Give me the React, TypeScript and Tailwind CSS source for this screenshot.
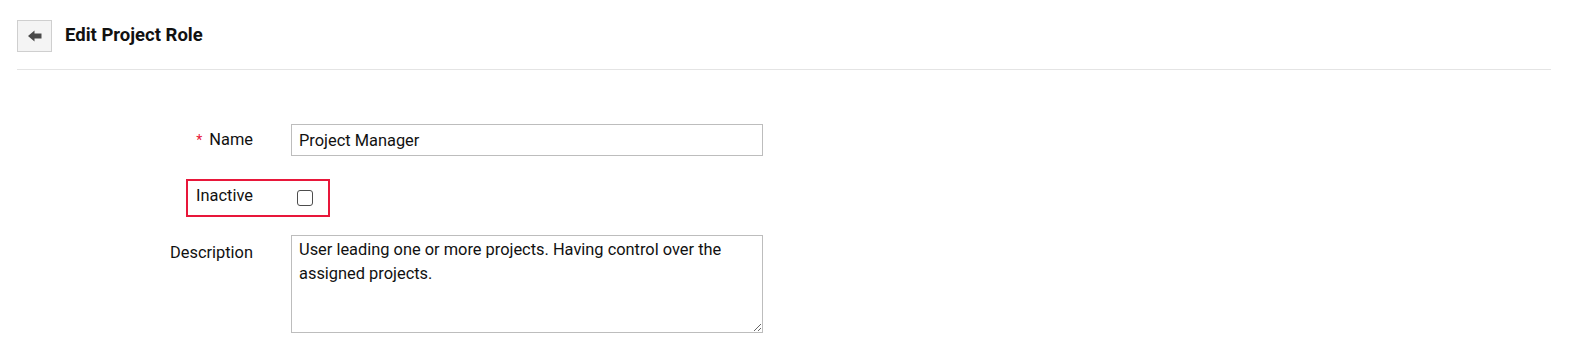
import { useState } from 'react'

function BackArrow() {
  return (
    <svg width="14" height="12" viewBox="0 0 14 12" fill="#4a4a4a">
      <path d="M0 6 L6.5 0.5 L6.5 3.5 L13.5 3.5 L13.5 8.5 L6.5 8.5 L6.5 11.5 Z" />
    </svg>
  )
}

export default function App() {
  const [name, setName] = useState('Project Manager')
  const [desc, setDesc] = useState('User leading one or more projects. Having control over the assigned projects.')
  const [inactive, setInactive] = useState(false)

  return (
    <div className="min-h-screen bg-white px-[17px] text-[16.4px] text-[#111]" style={{ fontFamily: 'Roboto, "Liberation Sans", sans-serif' }}>
      {/* header */}
      <div className="flex items-center gap-[13px] pt-[20px]">
        <button className="grid h-[32px] w-[35px] place-items-center border border-[#cfcfcf] bg-[#f4f4f4]">
          <BackArrow />
        </button>
        <h1 className="text-[18.5px] font-bold text-[#111]">Edit Project Role</h1>
      </div>
      <div className="mt-[17px] mr-[5px] border-t border-[#e4e4e4]" />

      {/* form */}
      <div className="mt-[54px] flex flex-col">
        <div className="flex h-[32px] items-center gap-[38px]">
          <label className="w-[236px] text-right">
            <span className="mr-[7px] text-[14px] text-[#e8173a]">*</span>Name
          </label>
          <input value={name} onChange={(e) => setName(e.target.value)}
            className="h-[32px] w-[472px] border border-[#bdbdbd] px-[7px] outline-none" />
        </div>

        <div className="relative mt-[24px] flex h-[36px] items-center gap-[38px]">
          <div className="pointer-events-none absolute -top-[1px] left-[169px] h-[38px] w-[144px] border-2 border-[#e8173a]" />
          <label className="w-[236px] -translate-y-[2px] text-right">Inactive</label>
          <button onClick={() => setInactive((v) => !v)}
            className="ml-[6px] h-[16px] w-[16px] rounded-[3px] border border-[#4d4d4d] bg-white" aria-checked={inactive} role="checkbox" />
        </div>

        <div className="mt-[19px] flex items-start gap-[38px]">
          <label className="w-[236px] pt-[6px] text-right">Description</label>
          <textarea value={desc} onChange={(e) => setDesc(e.target.value)}
            className="h-[98px] w-[472px] border border-[#bdbdbd] px-[7px] py-[2px] leading-[24px] outline-none" />
        </div>
      </div>
    </div>
  )
}
